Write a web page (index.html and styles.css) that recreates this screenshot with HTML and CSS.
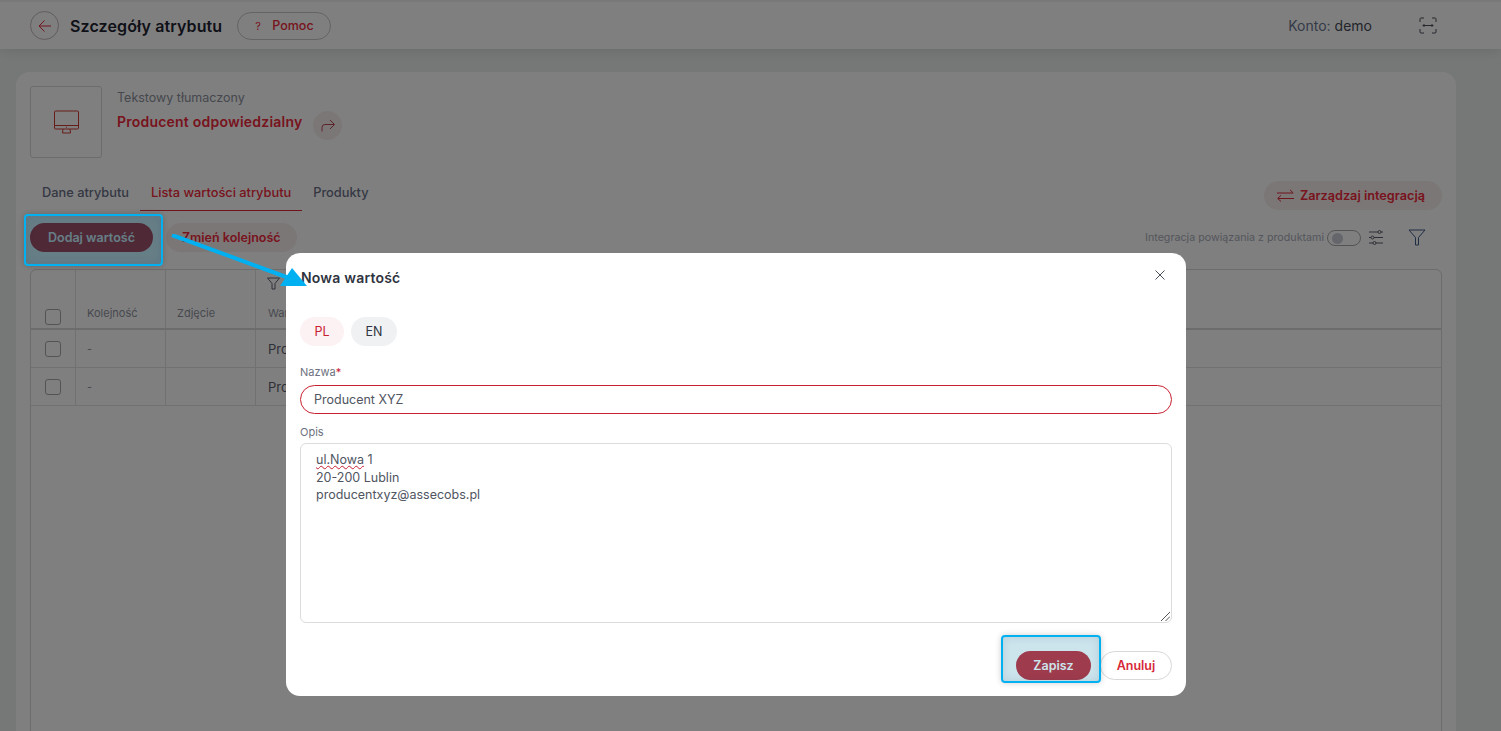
FILE: index.html
```html
<!DOCTYPE html>
<html lang="pl">
<head>
<meta charset="utf-8">
<title>Szczegóły atrybutu</title>
<link rel="stylesheet" href="styles.css">
</head>
<body>
<div class="page">
  <header class="topbar">
    <div class="topbar-left">
      <button class="back-btn"><svg width="14" height="14" viewBox="0 0 14 14" fill="none" stroke="currentColor" stroke-width="1"><path d="M13 7H1M6.500 1.500 1 7l5.500 5.500"/></svg></button>
      <h1 class="page-title">Szczegóły atrybutu</h1>
      <button class="help-btn"><span class="help-q">?</span>Pomoc</button>
    </div>
    <div class="topbar-right">
      <span class="account"><span class="account-label">Konto:</span> demo</span>
      <svg class="expand-icon" width="18" height="17" viewBox="0 0 18 17" fill="none" stroke="#4a4f5a" stroke-width="1"><path d="M1 5V2a1 1 0 0 1 1-1h3M13 1h3a1 1 0 0 1 1 1v3M1 12v3a1 1 0 0 0 1 1h3M13 16h3a1 1 0 0 0 1-1v-3M4 8.500h10M5.500 7 4 8.500 5.500 10M12.500 7 14 8.500 12.500 10"/></svg>
    </div>
  </header>

  <main class="content">
    <section class="card">
      <div class="attr-head">
        <div class="attr-thumb">
          <svg width="25" height="24" viewBox="0 0 25 24" fill="none" stroke="#cc3a34" stroke-width="1"><rect x=".5" y="1" width="24" height="18" rx="1"/><path d="M.5 15.500h24M9 19l-.5 4h8l-.5-4"/><path d="M12 17.200h1"/></svg>
        </div>
        <div class="attr-info">
          <div class="attr-type">Tekstowy tłumaczony</div>
          <div class="attr-name-row">
            <span class="attr-name">Producent odpowiedzialny</span>
            <span class="share-btn"><svg width="14" height="13" viewBox="0 0 14 13" fill="none" stroke="#b84656" stroke-width="1"><path d="M1 12.500V8.500a3 3 0 0 1 3-3h9M9 1l4.500 4.500L9 10"/></svg></span>
          </div>
        </div>
      </div>

      <div class="tabs-row">
        <nav class="tabs">
          <span class="tab">Dane atrybutu</span>
          <span class="tab tab-active">Lista wartości atrybutu</span>
          <span class="tab">Produkty</span>
        </nav>
        <button class="soft-btn integration-btn"><svg width="17" height="13" viewBox="0 0 17 13" fill="none" stroke="#e0283a" stroke-width="1"><path d="M0 4h16M13 .8 16.300 4M17 9.500H1M4 6.300.7 9.500 4 12.500"/></svg>Zarządzaj integracją</button>
      </div>

      <div class="toolbar">
        <div class="toolbar-left">
          <button class="primary-btn">Dodaj wartość</button>
          <button class="soft-btn">Zmień kolejność</button>
        </div>
        <div class="toolbar-right">
          <span class="toggle-label">Integracja powiązania z produktami</span>
          <span class="toggle"><span class="toggle-dot"></span></span>
          <svg class="sliders" width="14" height="15" viewBox="0 0 14 15" fill="none" stroke="#5a5f6a" stroke-width="1"><path d="M0 2h14M0 7.500h14M0 13h14"/><circle cx="10.500" cy="2" r="1.500" fill="#fff"/><circle cx="3.500" cy="7.500" r="1.500" fill="#fff"/><circle cx="5.500" cy="13" r="1.500" fill="#fff"/></svg>
          <svg class="filter-big" width="18" height="17" viewBox="0 0 18 17" fill="none" stroke="#3f5a8a" stroke-width="1"><path d="M1 1h16l-6.500 7.500V16h-3V8.500z"/></svg>
        </div>
      </div>

      <div class="table">
        <div class="t-row t-head">
          <div class="t-cell c-check"><span class="check"></span></div>
          <div class="t-cell c-order">Kolejność</div>
          <div class="t-cell c-photo">Zdjęcie</div>
          <div class="t-cell c-value">
            <svg class="filter-small" width="13" height="13" viewBox="0 0 13 13" fill="none" stroke="#5a6070" stroke-width="1"><path d="M.5 1h12L8 6.500V12H5V6.500z"/></svg>
            <span>Wartość</span>
          </div>
        </div>
        <div class="t-row">
          <div class="t-cell c-check"><span class="check"></span></div>
          <div class="t-cell c-order">-</div>
          <div class="t-cell c-photo"></div>
          <div class="t-cell c-value t-text">Producent ABC</div>
        </div>
        <div class="t-row">
          <div class="t-cell c-check"><span class="check"></span></div>
          <div class="t-cell c-order">-</div>
          <div class="t-cell c-photo"></div>
          <div class="t-cell c-value t-text">Producent DEF</div>
        </div>
      </div>
    </section>
  </main>
</div>

<div class="overlay"></div>

<div class="mark mark-add"></div>

<div class="modal">
  <div class="modal-head">
    <h2 class="modal-title">Nowa wartość</h2>
    <svg class="modal-close" width="10" height="10" viewBox="0 0 10 10" fill="none" stroke="#4a4f5a" stroke-width="1"><path d="M.5.500l9 9M9.500.500l-9 9"/></svg>
  </div>
  <div class="lang-row">
    <span class="lang lang-active">PL</span>
    <span class="lang">EN</span>
  </div>
  <label class="field-label label-name">Nazwa<span class="req">*</span></label>
  <div class="input">Producent XYZ</div>
  <label class="field-label label-desc">Opis</label>
  <div class="textarea">
    <div class="ta-line"><span class="spell">ul.Nowa</span> 1</div>
    <div class="ta-line">20-200 Lublin</div>
    <div class="ta-line">producentxyz@assecobs.pl</div>
    <svg class="resize" width="9" height="9" viewBox="0 0 9 9" fill="none" stroke="#555" stroke-width="1"><path d="M0 9 9 0M4.500 9 9 4.500"/></svg>
  </div>
  <div class="modal-actions">
    <button class="primary-btn save-btn">Zapisz</button>
    <button class="cancel-btn">Anuluj</button>
  </div>
</div>

<div class="mark mark-save"></div>

<svg class="arrow" width="150" height="65" viewBox="0 0 150 65">
  <path d="M1 1 118 44" stroke="#00b0f0" stroke-width="4" fill="none"/>
  <path d="M136 52 109 52 121 34z" fill="#00b0f0"/>
</svg>
</body>
</html>
```
FILE: styles.css
```css
* { box-sizing: border-box; }
html, body { margin: 0; height: 731px; overflow: hidden; }
body { font-family: Inter, "Liberation Sans", sans-serif; color: #2f3440; background: #edf1ef; }
button { font-family: inherit; cursor: pointer; }

.page { height: 731px; display: flex; flex-direction: column; }

.topbar { height: 49px; flex: none; display: flex; justify-content: space-between; align-items: center; padding: 0 64px 0 30px; background: #fff; border-top: 2px solid #f2f2f2; box-shadow: 0 2px 12px rgba(0, 0, 0, .1); position: relative; }
.topbar-left { display: flex; align-items: center; }
.back-btn { width: 29px; height: 29px; padding: 0; display: flex; align-items: center; justify-content: center; border: 1px solid #c4b8ba; border-radius: 50%; background: #fff; color: #e0283a; }
.page-title { margin: 0 15px 0 11px; font-size: 16px; font-weight: 600; color: #1f2330; letter-spacing: .12px; }
.help-btn { width: 94px; height: 28px; padding: 0 0 0 17px; display: flex; align-items: center; border: 1px solid #c8c8c8; border-radius: 14px; background: #fff; color: #f0283a; font-size: 12.500px; font-weight: 500; }
.help-q { width: 17px; font-size: 11px; font-weight: 400; text-align: left; }
.topbar-right { display: flex; align-items: center; gap: 47px; }
.account { font-size: 14px; color: #454a58; }
.account-label { color: #6a7590; }
.expand-icon { display: block; }

.content { flex: 1; min-height: 0; padding: 23px 45px 0 16px; }
.card { height: 100%; padding: 14px 14px 0; background: #fff; border-radius: 14px 14px 0 0; }

.attr-head { display: flex; gap: 15px; }
.attr-thumb { width: 72px; height: 72px; display: flex; align-items: center; justify-content: center; border: 1px solid #d8d8d8; border-radius: 3px; }
.attr-type { padding-top: 4px; font-size: 12.500px; line-height: 15px; color: #8c909c; }
.attr-name-row { margin-top: 2px; display: flex; align-items: flex-start; gap: 11px; }
.attr-name { margin-top: 6px; line-height: 17px; font-size: 14px; font-weight: 600; color: #f0283a; letter-spacing: .22px; }
.share-btn { width: 29px; height: 29px; display: flex; align-items: center; justify-content: center; border-radius: 50%; background: #f9eeee; margin-top: 4px; }

.tabs-row { margin-top: 21px; display: flex; justify-content: space-between; align-items: center; height: 32px; }
.tabs { display: flex; height: 32px; margin-left: 1px; }
.tab { padding: 0 11px; height: 32px; line-height: 28px; font-size: 12.800px; font-weight: 500; color: #6a7088; }
.tab-active { color: #f0283a; border-bottom: 1px solid #e0283a; }

.soft-btn { height: 29px; padding: 0 16px; display: flex; align-items: center; gap: 6px; border: 0; border-radius: 15px; background: #f9eeee; color: #f0283a; font-size: 12.500px; font-weight: 600; }
.integration-btn { padding: 0 17px 0 13px; font-size: 12.700px; }

.toolbar { margin-top: 11px; display: flex; justify-content: space-between; align-items: center; height: 31px; }
.toolbar-left { display: flex; gap: 13px; }
.primary-btn { height: 29px; padding: 0 18px; border: 0; border-radius: 15px; background: #c62c38; color: #fff; font-size: 12.500px; font-weight: 600; }
.toolbar-right { display: flex; align-items: center; padding-right: 16px; }
.toggle-label { font-size: 10.700px; color: #a8acb8; }
.toggle { width: 34px; height: 16px; margin-left: 3px; padding: 2px 0 0 4px; border: 1px solid #a8a8a8; border-radius: 8px; }
.toggle-dot { display: block; width: 11px; height: 11px; border-radius: 50%; background: #c8ccd8; }
.sliders { margin-left: 8px; }
.filter-big { margin-left: 25px; }

.table { margin-top: 16px; height: 470px; border: 1px solid #d8d8d8; border-radius: 6px 6px 0 0; }
.t-row { display: flex; height: 38px; border-bottom: 1px solid #e2e2e2; }
.t-head { height: 60px; border-bottom: 2px solid #d8d8d8; }
.t-cell { display: flex; align-items: center; padding-left: 11px; border-right: 1px solid #e2e2e2; font-size: 11px; color: #8f939f; }
.c-check { width: 45px; padding-left: 14px; }
.c-order { width: 90px; }
.c-photo { width: 90px; }
.c-value { flex: 1; padding-left: 12px; border-right: 0; }
.t-head .t-cell { align-items: flex-end; padding-bottom: 8px; position: relative; }
.t-head .c-check { padding-bottom: 3px; }
.filter-small { position: absolute; left: 11px; top: 7px; }
.check { width: 16px; height: 16px; border: 1px solid #a8a8a8; border-radius: 3px; }
.t-text { font-size: 13px; color: #5c6070; }

.overlay { position: fixed; inset: 0; background: rgba(0, 0, 0, .5); }

.mark { position: fixed; border: 2px solid #00b0f0; border-radius: 4px; background: rgba(0, 120, 160, .2); box-shadow: 0 0 6px rgba(0, 0, 0, .2), inset 0 0 8px rgba(0, 60, 90, .12); }
.mark-add { left: 24px; top: 214px; width: 139px; height: 52px; }
.mark-save { left: 1001px; top: 635px; width: 100px; height: 48px; }

.modal { position: fixed; left: 286px; top: 253px; width: 900px; height: 443px; padding: 0 14px; background: #fff; border-radius: 14px; }
.modal-head { height: 49px; display: flex; justify-content: space-between; align-items: center; padding: 0 7px 0 1px; }
.modal-title { margin: 0; font-size: 14px; font-weight: 600; letter-spacing: .2px; color: #2f3440; }
.modal-close { margin-bottom: 5px; }
.lang-row { margin-top: 15px; display: flex; gap: 7px; }
.lang { height: 29px; padding: 0 14.500px; line-height: 29px; border-radius: 15px; background: #f0f1f3; font-size: 12.500px; color: #2f3440; }
.lang-active { background: #fcf1f3; color: #c8202f; }
.field-label { display: block; font-size: 11px; line-height: 14px; color: #6d7180; }
.label-name { margin-top: 19px; }
.label-desc { margin-top: 11px; }
.req { color: #c8202f; }
.input { margin-top: 6px; height: 29px; padding: 0 13px; line-height: 27px; border: 1px solid #c8202f; border-radius: 15px; font-size: 12.500px; color: #50555f; }
.textarea { position: relative; margin-top: 4px; height: 180px; padding: 7px 15px; border: 1px solid #dcdcdc; border-radius: 6px; font-size: 12.500px; line-height: 17.500px; color: #50555f; }
.spell { text-decoration: underline wavy #c8202f 1px; }
.resize { position: absolute; right: 1px; bottom: 1px; }
.modal-actions { margin-top: 28px; display: flex; justify-content: flex-end; }
.save-btn { width: 75px; padding: 0; margin-right: 9px; }
.cancel-btn { width: 72px; height: 29px; padding: 0; border: 1px solid #d8d8d8; border-radius: 15px; background: #fff; color: #d62839; font-size: 12.500px; font-weight: 600; }

.arrow { position: fixed; left: 171px; top: 234px; }
```
